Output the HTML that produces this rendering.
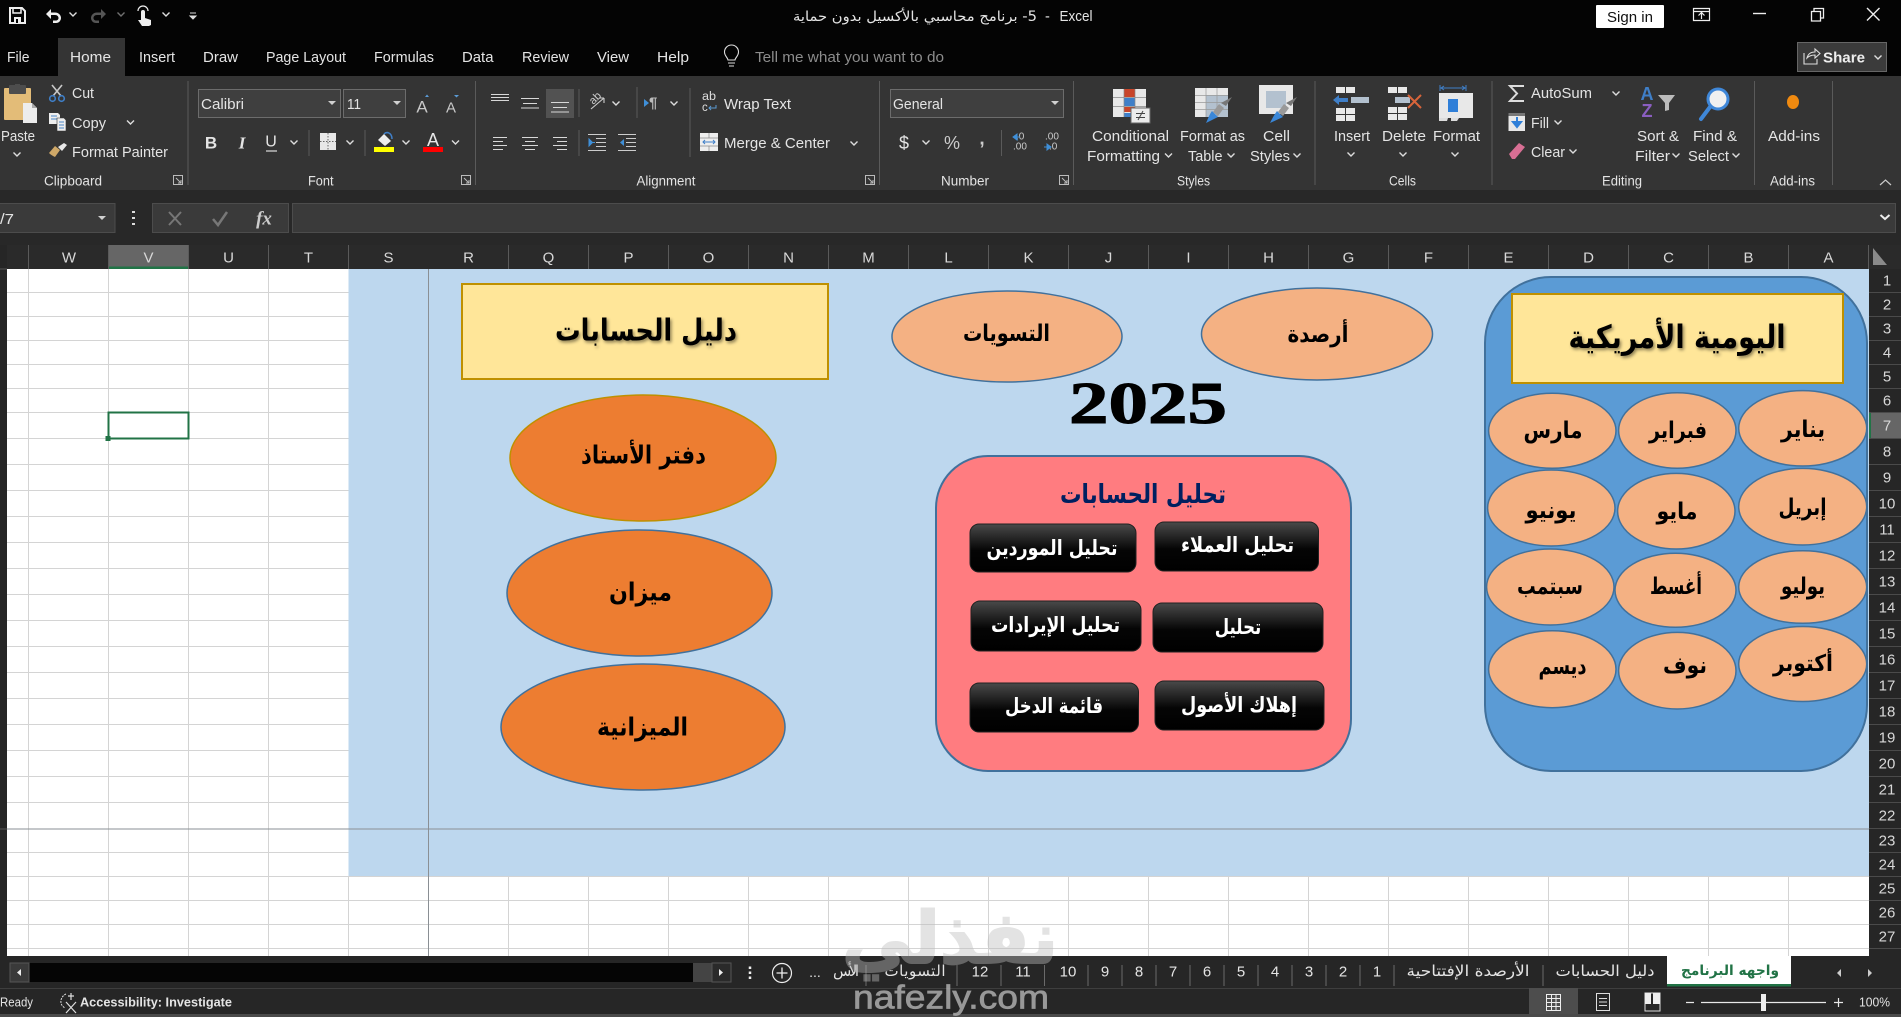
<!DOCTYPE html>
<html lang="en"><head><meta charset="utf-8"><title>Excel</title>
<style>
html,body{margin:0;padding:0;background:#000;overflow:hidden}
svg{display:block}
text{font-family:"Liberation Sans",sans-serif;font-size:14.5px;fill:#e4e4e4;dominant-baseline:central;transform:translateY(1px)}
.a{font-family:"DejaVu Sans",sans-serif;font-weight:bold;fill:#000;text-anchor:middle;direction:rtl;transform:none}
.r{font-family:"DejaVu Sans",sans-serif;fill:#e4e4e4;text-anchor:middle;direction:rtl;font-size:15px;transform:none}
.c{text-anchor:middle}
.h{font-size:15px;text-anchor:middle;fill:#d8d8d8;transform:none}
.n{font-size:15px;text-anchor:middle;fill:#d8d8d8;transform:translateX(1px)}
.sh{filter:url(#ds)}
</style></head><body>
<svg width="1901" height="1017" viewBox="0 0 1901 1017" xmlns="http://www.w3.org/2000/svg">
<defs>
<symbol id="ch" overflow="visible"><path d="M-3.5-1.5L0 2l3.5-3.5" fill="none" stroke="#ddd" stroke-width="1.4"/></symbol>
<symbol id="la" overflow="visible"><path d="M-4.5-4.5h9v9h-9zM-2-2l5 5M3 0v3H0" fill="none" stroke="#bbb" stroke-width="1"/></symbol>
<symbol id="dd" overflow="visible"><path d="M-4-2h8l-4 4z" fill="#d0d0d0"/></symbol>
<linearGradient id="bt" x1="0" y1="0" x2="0" y2="1"><stop offset="0" stop-color="#4a4a4a"/><stop offset=".55" stop-color="#050505"/><stop offset="1" stop-color="#000"/></linearGradient>
<filter id="ds" x="-10%" y="-20%" width="120%" height="150%"><feDropShadow dx="1.5" dy="2" stdDeviation="1.5" flood-color="#000" flood-opacity=".45"/></filter>
</defs>

<!-- title + tabs -->
<rect width="1901" height="76" fill="#040404"/>
<!-- qat -->
<g fill="none" stroke="#eee" stroke-width="2"><path d="M10 8h12l3 3v12H10z"/><path d="M13 8v5h8V8" stroke-width="1.5"/></g><rect x="14" y="17" width="7" height="6" fill="#eee"/><rect x="16" y="19" width="2" height="4" fill="#040404"/>
<path d="M46 14l5-5v3.5h4c4 0 6 3 6 5.500s-2 5-5 5h-3v-2.500h3c1.500 0 2.500-1.200 2.500-2.500s-1-3-3.500-3h-4V19z" fill="#eee"/>
<use href="#ch" x="73" y="14"/>
<path d="M106 14l-5-5v3.5h-4c-4 0-6 3-6 5.500s2 5 5 5h3v-2.500h-3c-1.500 0-2.500-1.200-2.500-2.500s1-3 3.500-3h4V19z" fill="#555"/>
<g opacity=".5"><use href="#ch" x="121" y="14"/></g>
<g transform="translate(0,3)"><path d="M141 15V9a2 2 0 014 0v6l6 2v5l-2 1h-7l-4-6 3 0z" fill="#eee"/><path d="M138 8a5 5 0 0110 0" fill="none" stroke="#eee" stroke-width="1.2"/></g>
<use href="#ch" x="166" y="14"/>
<path d="M190 13h6M190 16h6l-3 3z" stroke="#ddd" fill="#ddd" stroke-width="1"/>
<text class="r" x="915" y="17" textLength="244" lengthAdjust="spacingAndGlyphs" style="font-size:14px">5- برنامج محاسبي بالأكسيل بدون حماية</text>
<text x="1045" y="16" font-size="14">-</text><text x="1059.5" y="16" textLength="33" lengthAdjust="spacingAndGlyphs">Excel</text>
<rect x="1596" y="5" width="68" height="23" rx="1" fill="#fff"/><text class="c" x="1630" y="17" style="fill:#111" textLength="46" lengthAdjust="spacingAndGlyphs">Sign in</text>
<path d="M1693.5 8.5h16v12h-16zM1693.5 11.5h16M1701.5 19v-6M1698.5 15.500l3-3 3 3" fill="none" stroke="#eee" stroke-width="1.2"/>
<path d="M1753 13.5h13" stroke="#eee" stroke-width="1.4"/>
<path d="M1811.5 11.5h9v9.500h-9zM1814 11v-2.500h9.500v9.500h-3" fill="none" stroke="#eee" stroke-width="1.3"/>
<path d="M1867 8l12.500 12.500M1879.5 8L1867 20.500" stroke="#eee" stroke-width="1.4"/>

<rect x="58" y="38" width="67" height="38" fill="#343434"/>
<text x="7" y="57" textLength="22.5" lengthAdjust="spacingAndGlyphs">File</text>
<text x="70" y="57" textLength="41" lengthAdjust="spacingAndGlyphs">Home</text>
<text x="139" y="57" textLength="36" lengthAdjust="spacingAndGlyphs">Insert</text>
<text x="203" y="57" textLength="35" lengthAdjust="spacingAndGlyphs">Draw</text>
<text x="266" y="57" textLength="80" lengthAdjust="spacingAndGlyphs">Page Layout</text>
<text x="374" y="57" textLength="60" lengthAdjust="spacingAndGlyphs">Formulas</text>
<text x="462" y="57" textLength="31.5" lengthAdjust="spacingAndGlyphs">Data</text>
<text x="522" y="57" textLength="47" lengthAdjust="spacingAndGlyphs">Review</text>
<text x="597" y="57" textLength="32" lengthAdjust="spacingAndGlyphs">View</text>
<text x="657" y="57" textLength="32" lengthAdjust="spacingAndGlyphs">Help</text>
<path d="M728 60c0-2-3.5-4-3.5-8a7 7 0 0114 0c0 4-3.5 6-3.5 8zM728 63h7M729 66h5" fill="none" stroke="#ddd" stroke-width="1.1"/>
<text x="755" y="57" textLength="189" lengthAdjust="spacingAndGlyphs" style="fill:#8c8c8c">Tell me what you want to do</text>
<rect x="1797.5" y="42.5" width="89" height="29" fill="#3b3b3b" stroke="#666"/>
<path d="M1804 53v11h13v-5M1807 58c1-4 4-6 8-6v-3l5 4.500-5 4.500v-3c-3 0-6 1-8 3z" fill="none" stroke="#ddd" stroke-width="1.1"/>
<text x="1823" y="57" textLength="42" lengthAdjust="spacingAndGlyphs" style="font-weight:bold;font-size:15px;fill:#eee">Share</text>
<use href="#ch" x="1878" y="57"/>

<!-- ribbon -->
<rect y="76" width="1901" height="114" fill="#343434"/>
<rect y="190" width="1901" height="79" fill="#282828"/>
<path d="M188 81v104M475.5 81v104M879.5 81v104M1073.5 81v104M1315 81v104M1492 81v104M1754.5 81v104M1832.5 81v104" stroke="#5a5a5a"/>

<!-- clipboard -->
<rect x="4" y="88" width="27" height="32" rx="1" fill="#e3bc78"/><rect x="9" y="85" width="17" height="9" rx="1" fill="#4d4d4d"/><rect x="15" y="84" width="5" height="4" fill="#4d4d4d"/>
<path d="M23 103h9l5 5v15H23z" fill="#ededed"/><path d="M32 103v5h5z" fill="#aaa"/>
<text x="1" y="136" textLength="34" lengthAdjust="spacingAndGlyphs">Paste</text><use href="#ch" x="17" y="154"/>
<path d="M52 85l9 11M62 85l-9 11" stroke="#c8c8c8" stroke-width="1.6"/><circle cx="52.5" cy="98.5" r="2.8" fill="none" stroke="#3f7fc8" stroke-width="1.6"/><circle cx="61.5" cy="98.5" r="2.8" fill="none" stroke="#3f7fc8" stroke-width="1.6"/>
<text x="72" y="93" textLength="22" lengthAdjust="spacingAndGlyphs">Cut</text>
<path d="M49 113h9l2 2v9H49z" fill="#eee"/><path d="M51 116h6M51 119h6" stroke="#4a87c8"/><path d="M57 118h7l2 2v11h-9z" fill="#eee" stroke="#343434" stroke-width=".6"/><path d="M59 122h5M59 125h5M59 128h5" stroke="#4a87c8"/>
<text x="72" y="123" textLength="34" lengthAdjust="spacingAndGlyphs">Copy</text><use href="#ch" x="130.5" y="122"/>
<path d="M49 153l6-7 5 4-5 7c-2-1-4-2-6-4z" fill="#cfa868"/><path d="M58 147l6-4 3 2-5 6z" fill="#e8e8e8"/>
<text x="72" y="152" textLength="96" lengthAdjust="spacingAndGlyphs">Format Painter</text>
<text x="44" y="180" textLength="58" lengthAdjust="spacingAndGlyphs" style="font-size:13.5px">Clipboard</text><use href="#la" x="178" y="180"/>

<!-- font -->
<rect x="198.5" y="89.5" width="142" height="28" fill="#3f3f3f" stroke="#6c6c6c"/><text x="201" y="104" textLength="43" lengthAdjust="spacingAndGlyphs">Calibri</text><use href="#dd" x="332" y="103"/>
<rect x="343.5" y="89.5" width="62" height="28" fill="#3f3f3f" stroke="#6c6c6c"/><text x="347" y="104" textLength="14" lengthAdjust="spacingAndGlyphs">11</text><use href="#dd" x="397" y="103"/>
<text class="c" x="422" y="106" style="font-size:17px;fill:#c8c8c8">A</text><path d="M425 97l2-2.500 2 2.500z" fill="#5b9bd5"/>
<text class="c" x="451" y="107" style="font-size:15px;fill:#c8c8c8">A</text><path d="M454 95h5l-2.500 2.500z" fill="#5b9bd5"/>
<text class="c" x="211" y="142" style="font-weight:bold;font-size:17px">B</text>
<text class="c" x="242" y="142" style="font-style:italic;font-weight:bold;font-size:17px;font-family:'Liberation Serif',serif">I</text>
<text class="c" x="271" y="141" style="font-size:16px">U</text><path d="M266 151h11" stroke="#ddd" stroke-width="1.2"/><use href="#ch" x="294" y="142"/>
<path d="M309 130v26M365 130v26M579 89v28M579 130v26M690 88v69M637 87v31M1001.5 130v26" stroke="#5a5a5a"/>
<rect x="320" y="133" width="16" height="17" fill="#e8e8e8"/><path d="M328 133v17M320 141.5h16" stroke="#666" stroke-dasharray="1.5 1.5"/><use href="#ch" x="350" y="142"/>
<path d="M378 140l6-6 7 7-6 5z" fill="#eee"/><path d="M384 134c3-3 8-1 8 5" fill="none" stroke="#3f7fc8" stroke-width="1.5"/><rect x="374" y="147" width="20" height="5" fill="#ff0"/><use href="#ch" x="406" y="142"/>
<text class="c" x="433" y="139" style="font-size:18px;fill:#e8e8e8">A</text><rect x="423" y="147" width="20" height="5" fill="#f00"/><use href="#ch" x="455.5" y="142"/>
<text x="308" y="180" textLength="25.5" lengthAdjust="spacingAndGlyphs" style="font-size:13.5px">Font</text><use href="#la" x="466" y="180"/>

<!-- alignment -->
<rect x="546" y="89" width="28" height="29" fill="#525252"/>
<path d="M491 94.5h18M491 97.5h18M491 100.5h18M521 98.5h18M523 103.5h14M521 108h18M551 102.5h18M553 107.5h14M551 112h18" stroke="#d8d8d8" stroke-width="1.1"/>
<path d="M493 137.5h14M493 141.5h10M493 145.5h14M493 149.5h10M522 137.5h16M525 141.5h10M522 145.5h16M525 149.5h10M553 137.5h14M557 141.5h10M553 145.5h14M557 149.5h10" stroke="#d8d8d8" stroke-width="1.1"/>
<text x="590" y="100" style="font-size:11px;fill:#ccc;transform:rotate(-45deg);transform-origin:594px 100px">ab</text><path d="M591 109l13-11M604 98h-5M604 98v5" stroke="#ccc" fill="none" stroke-width="1.1"/><use href="#ch" x="616" y="103"/>
<path d="M588 134.5h18M596 138.5h10M596 142.5h10M596 146.5h10M588 150.5h18" stroke="#ccc" stroke-width="1.1"/><path d="M589 139v7l3.5-3.5zM592 142.5h3" fill="#3f8fd8" stroke="#3f8fd8"/>
<path d="M618 134.5h18M626 138.5h10M626 142.5h10M626 146.5h10M618 150.5h18" stroke="#ccc" stroke-width="1.1"/><path d="M624 139l-4 3.5 4 3.5z" fill="#3f8fd8"/>
<path d="M644 99v8l5-4z" fill="#3f8fd8"/><text x="649" y="102" style="font-size:15px;font-weight:bold;fill:#bbb">¶</text><use href="#ch" x="674" y="103"/>
<text x="702" y="96" style="font-size:11.5px;fill:#ddd" textLength="14" lengthAdjust="spacingAndGlyphs">ab</text><text x="702" y="107" style="font-size:11.5px;fill:#ddd">c</text><path d="M716 105v3h-7M711 106l-2 2 2 2" fill="none" stroke="#5b9bd5"/>
<text x="724" y="104" textLength="67" lengthAdjust="spacingAndGlyphs">Wrap Text</text>
<rect x="700" y="133" width="18" height="18" fill="#eee"/><path d="M700 138h18M700 146h18M709 133v5M709 146v5" stroke="#888" stroke-width=".7"/><path d="M703 142h12M705 140l-2 2 2 2M713 140l2 2-2 2" stroke="#3f7fc8" fill="none"/>
<text x="724" y="143" textLength="106" lengthAdjust="spacingAndGlyphs">Merge &amp; Center</text><use href="#ch" x="854" y="143"/>
<text x="636.5" y="180" textLength="59" lengthAdjust="spacingAndGlyphs" style="font-size:13.5px">Alignment</text><use href="#la" x="870" y="180"/>

<!-- number -->
<rect x="890.5" y="89.5" width="173" height="28" fill="#3f3f3f" stroke="#6c6c6c"/><text x="893" y="104" textLength="50" lengthAdjust="spacingAndGlyphs">General</text><use href="#dd" x="1055" y="103"/>
<text class="c" x="904" y="142" style="font-size:18px">$</text><use href="#ch" x="926" y="142"/>
<text class="c" x="952" y="142" style="font-size:18px;fill:#ccc">%</text><text class="c" x="982" y="138" style="font-size:19px;font-weight:bold;fill:#ccc">,</text>
<text x="1016" y="136" style="font-size:10px;fill:#ccc">.0</text><text x="1013" y="146" style="font-size:10px;fill:#ccc">.00</text><path d="M1017 134l-4 3 4 3zM1016 137h4" fill="#3f8fd8" stroke="#3f8fd8"/>
<text x="1045" y="136" style="font-size:10px;fill:#ccc">.00</text><text x="1049" y="146" style="font-size:10px;fill:#ccc">.0</text><path d="M1047 144l4 3-4 3zM1048 147h-4" fill="#3f8fd8" stroke="#3f8fd8"/>
<text x="941" y="180" textLength="48" lengthAdjust="spacingAndGlyphs" style="font-size:13.5px">Number</text><use href="#la" x="1064" y="180"/>

<!-- styles -->
<rect x="1113" y="89" width="33" height="28" fill="#e8e8e8"/><rect x="1124" y="89" width="11" height="8" fill="#c8452a"/><rect x="1124" y="98" width="11" height="8" fill="#3f7fc8"/><rect x="1124" y="107" width="11" height="5" fill="#c8452a"/><rect x="1124" y="113" width="11" height="4" fill="#3f7fc8"/><path d="M1113 97.5h33M1113 106.5h33M1124 89v28M1135 89v28" stroke="#888" stroke-width=".7"/>
<rect x="1131" y="108" width="19" height="15" fill="#ececec" stroke="#666"/><path d="M1136 113.5h9M1136 117.5h9M1143 111l-5 9" stroke="#444" fill="none"/>
<text x="1092" y="136" textLength="77" lengthAdjust="spacingAndGlyphs">Conditional</text><text x="1087" y="156" textLength="73" lengthAdjust="spacingAndGlyphs">Formatting</text><use href="#ch" x="1168.5" y="155"/>
<rect x="1195" y="88" width="33" height="29" fill="#e8e8e8"/><rect x="1206" y="95" width="22" height="22" fill="#b3c1cf"/><path d="M1195 95.5h33M1195 102.5h33M1195 109.5h33M1206 88v29M1217 88v29" stroke="#999" stroke-width=".7"/>
<path d="M1232 97l-6 9-5-3z" fill="#777"/><path d="M1219 104l5 4-6 8-5-4z" fill="#999"/><path d="M1212 111l6 6-12 6c2-4 3-8 6-12z" fill="#3a87d8"/>
<text x="1180" y="136" textLength="65" lengthAdjust="spacingAndGlyphs">Format as</text><text x="1188" y="156" textLength="34.5" lengthAdjust="spacingAndGlyphs">Table</text><use href="#ch" x="1231" y="155"/>
<rect x="1259" y="85" width="34" height="29" fill="#e8e8e8"/><rect x="1266" y="91" width="20" height="17" fill="#b3c1cf"/>
<path d="M1297 97l-6 9-5-3z" fill="#777"/><path d="M1284 104l5 4-6 8-5-4z" fill="#999"/><path d="M1277 111l6 6-13 6c2-4 4-8 7-12z" fill="#3a87d8"/>
<text x="1263" y="136" textLength="27" lengthAdjust="spacingAndGlyphs">Cell</text><text x="1250" y="156" textLength="40" lengthAdjust="spacingAndGlyphs">Styles</text><use href="#ch" x="1297" y="155"/>
<text x="1177" y="180" textLength="33" lengthAdjust="spacingAndGlyphs" style="font-size:13.5px">Styles</text>

<!-- cells -->
<g fill="#e8e8e8"><rect x="1336" y="87" width="19" height="6"/><rect x="1336" y="108" width="19" height="13"/><rect x="1388" y="87" width="19" height="6"/><rect x="1388" y="107" width="19" height="13"/></g>
<path d="M1345.5 87v6M1345.5 108v13M1336 114.5h19M1397.5 87v6M1397.5 107v13M1388 113.5h19" stroke="#343434"/>
<rect x="1351" y="97" width="18" height="6" fill="#b3c1cf"/><path d="M1333 100l6-5v3h9v4h-9v3z" fill="#3f7fc8"/>
<rect x="1395" y="97" width="15" height="6" fill="#b3c1cf"/><path d="M1408 95l13 13M1421 95l-13 13" stroke="#d8643a" stroke-width="2"/>
<path d="M1440 88h26M1440 85v6M1466 85v6M1444 86l-3 2 3 2M1462 86l3 2-3 2" stroke="#3f7fc8" fill="none"/>
<rect x="1439" y="93" width="34" height="25" fill="#e8e8e8"/><rect x="1448" y="99" width="10" height="13" fill="#2f7fd8"/><path d="M1439 121h8l1-3h-9zM1451 121h6l2-3h-8z" fill="#ddd"/>
<text x="1334" y="136" textLength="36" lengthAdjust="spacingAndGlyphs">Insert</text><use href="#ch" x="1351" y="154"/>
<text x="1382" y="136" textLength="44" lengthAdjust="spacingAndGlyphs">Delete</text><use href="#ch" x="1403" y="154"/>
<text x="1433" y="136" textLength="47" lengthAdjust="spacingAndGlyphs">Format</text><use href="#ch" x="1455" y="154"/>
<text x="1389" y="180" textLength="27" lengthAdjust="spacingAndGlyphs" style="font-size:13.5px">Cells</text>

<!-- editing -->
<path d="M1524 86h-14l7 7.5-7 7.5h14" fill="none" stroke="#ddd" stroke-width="2"/>
<text x="1531" y="93" textLength="61" lengthAdjust="spacingAndGlyphs">AutoSum</text><use href="#ch" x="1616" y="93"/>
<rect x="1508.5" y="113" width="16.5" height="18" fill="#e8e8e8"/><rect x="1508.5" y="113" width="16.5" height="3" fill="#777"/><path d="M1517 117v8M1513 122l4 5 4-5z" stroke="#2f7fd8" fill="#2f7fd8" stroke-width="2"/>
<text x="1531" y="123" textLength="18" lengthAdjust="spacingAndGlyphs">Fill</text><use href="#ch" x="1558" y="122"/>
<path d="M1509 154l10-11 6 4-10 12h-3z" fill="#d86f94"/>
<text x="1531" y="152" textLength="34" lengthAdjust="spacingAndGlyphs">Clear</text><use href="#ch" x="1573" y="151"/>
<text class="c" x="1647" y="93" style="font-size:18px;font-weight:bold;fill:#3f7fc8">A</text><text class="c" x="1647" y="110" style="font-size:18px;font-weight:bold;fill:#8a5ec0">Z</text>
<path d="M1658 95h17l-6 8v7l-4 1v-8z" fill="#bbb"/>
<text x="1637" y="136" textLength="42" lengthAdjust="spacingAndGlyphs">Sort &amp;</text><text x="1635" y="156" textLength="35" lengthAdjust="spacingAndGlyphs">Filter</text><use href="#ch" x="1676" y="155"/>
<circle cx="1718" cy="99" r="10" fill="#f0f0f0" stroke="#3f87d8" stroke-width="3"/><path d="M1710 107l-9 12" stroke="#3f87d8" stroke-width="4" stroke-linecap="round"/>
<text x="1693" y="136" textLength="44" lengthAdjust="spacingAndGlyphs">Find &amp;</text><text x="1688" y="156" textLength="41" lengthAdjust="spacingAndGlyphs">Select</text><use href="#ch" x="1736" y="155"/>
<text x="1602" y="180" textLength="40" lengthAdjust="spacingAndGlyphs" style="font-size:13.5px">Editing</text>
<ellipse cx="1793" cy="102" rx="6" ry="7" fill="#f08a10"/>
<text x="1768" y="136" textLength="52" lengthAdjust="spacingAndGlyphs">Add-ins</text><text x="1770" y="180" textLength="45" lengthAdjust="spacingAndGlyphs" style="font-size:13.5px">Add-ins</text>
<path d="M1880 185l5.5-5 5.5 5" fill="none" stroke="#ccc" stroke-width="1.2"/>

<!-- formula bar -->
<rect x="-1" y="203.5" width="116" height="29" fill="#3a3a3a" stroke="#4c4c4c"/><text x="0" y="219" textLength="14" lengthAdjust="spacingAndGlyphs">/7</text><use href="#dd" x="102" y="218"/>
<path d="M133.5 211v2M133.5 217v2M133.5 223v2" stroke="#ddd" stroke-width="3"/>
<rect x="152.5" y="203.5" width="136" height="29" fill="#3a3a3a" stroke="#4c4c4c"/><rect x="292.5" y="203.5" width="1603" height="29" fill="#3a3a3a" stroke="#4c4c4c"/>
<path d="M169 212l12 13M181 212l-12 13" stroke="#777" stroke-width="2"/><path d="M213 219l5 6 9-13" stroke="#777" stroke-width="2.5" fill="none"/>
<text class="c" x="264" y="218" style="font-family:'Liberation Serif',serif;font-style:italic;font-weight:bold;font-size:19px;fill:#ccc">fx</text>
<path d="M1880.5 215l4.500 4 4.500-4" fill="none" stroke="#eee" stroke-width="2"/>

<!-- sheet -->
<rect x="7" y="269" width="1862" height="687" fill="#fff"/>
<rect x="348.5" y="269" width="1520.5" height="607.5" fill="#bdd7ee"/>
<path d="M7 292.5H348.5M7 316.5H348.5M7 340.5H348.5M7 364.5H348.5M7 388.5H348.5M7 412.5H348.5M7 438.5H348.5M7 464.5H348.5M7 490.5H348.5M7 516.5H348.5M7 542.5H348.5M7 568.5H348.5M7 594.5H348.5M7 620.5H348.5M7 646.5H348.5M7 672.5H348.5M7 698.5H348.5M7 724.5H348.5M7 750.5H348.5M7 776.5H348.5M7 802.5H348.5M7 852.5H348.5M7 900.5H1869M7 924.5H1869M7 948.5H1869M7 876.5H1869M28.5 269V956M108.5 269V956M188.5 269V956M268.5 269V956M348.5 876.5V956M508.5 876.5V956M588.5 876.5V956M668.5 876.5V956M748.5 876.5V956M828.5 876.5V956M908.5 876.5V956M988.5 876.5V956M1068.5 876.5V956M1148.5 876.5V956M1228.5 876.5V956M1308.5 876.5V956M1388.5 876.5V956M1468.5 876.5V956M1548.5 876.5V956M1628.5 876.5V956M1708.5 876.5V956M1788.5 876.5V956" stroke="#d4d4d4" fill="none"/>
<path d="M428.5 245V956M7 829H1869" stroke="#8a8f94"/>
<rect x="108.5" y="412.5" width="80" height="26" fill="#fff" stroke="#217346" stroke-width="2"/><rect x="105.5" y="436" width="5" height="5" fill="#217346"/>

<!-- col headers -->
<rect x="0" y="245" width="1901" height="24" fill="#2a2a2a"/>
<rect x="108.5" y="245" width="80" height="24" fill="#666"/><rect x="108.5" y="266.5" width="80" height="2.5" fill="#217346"/>
<path d="M28.5 245v24M108.5 245v24M188.5 245v24M268.5 245v24M348.5 245v24M508.5 245v24M588.5 245v24M668.5 245v24M748.5 245v24M828.5 245v24M908.5 245v24M988.5 245v24M1068.5 245v24M1148.5 245v24M1228.5 245v24M1308.5 245v24M1388.5 245v24M1468.5 245v24M1548.5 245v24M1628.5 245v24M1708.5 245v24M1788.5 245v24M1868.5 245v24" stroke="#5a5a5a"/>
<text class="h" x="69" y="258">W</text><text class="h" x="148.5" y="258">V</text><text class="h" x="228.5" y="258">U</text><text class="h" x="308.5" y="258">T</text><text class="h" x="388.5" y="258">S</text><text class="h" x="468.5" y="258">R</text><text class="h" x="548.5" y="258">Q</text><text class="h" x="628.5" y="258">P</text><text class="h" x="708.5" y="258">O</text><text class="h" x="788.5" y="258">N</text><text class="h" x="868.5" y="258">M</text><text class="h" x="948.5" y="258">L</text><text class="h" x="1028.5" y="258">K</text><text class="h" x="1108.5" y="258">J</text><text class="h" x="1188.5" y="258">I</text><text class="h" x="1268.5" y="258">H</text><text class="h" x="1348.5" y="258">G</text><text class="h" x="1428.5" y="258">F</text><text class="h" x="1508.5" y="258">E</text><text class="h" x="1588.5" y="258">D</text><text class="h" x="1668.5" y="258">C</text><text class="h" x="1748.5" y="258">B</text><text class="h" x="1828.5" y="258">A</text>
<path d="M1873 248v17h14z" fill="#8a8a8a"/>

<!-- row headers -->
<rect x="1869" y="269" width="32" height="687" fill="#262626"/>
<rect x="1869" y="412.5" width="32" height="26" fill="#666"/><rect x="1869" y="412.5" width="2" height="26" fill="#217346"/>
<path d="M1869 292.5h32M1869 316.5h32M1869 340.5h32M1869 364.5h32M1869 388.5h32M1869 412.5h32M1869 438.5h32M1869 464.5h32M1869 490.5h32M1869 516.5h32M1869 542.5h32M1869 568.5h32M1869 594.5h32M1869 620.5h32M1869 646.5h32M1869 672.5h32M1869 698.5h32M1869 724.5h32M1869 750.5h32M1869 776.5h32M1869 802.5h32M1869 828.5h32M1869 852.5h32M1869 876.5h32M1869 900.5h32M1869 924.5h32M1869 948.5h32" stroke="#4a4a4a"/>
<text class="n" x="1886" y="281">1</text><text class="n" x="1886" y="305">2</text><text class="n" x="1886" y="329">3</text><text class="n" x="1886" y="353">4</text><text class="n" x="1886" y="377">5</text><text class="n" x="1886" y="401">6</text><text class="n" x="1886" y="426">7</text><text class="n" x="1886" y="452">8</text><text class="n" x="1886" y="478">9</text><text class="n" x="1886" y="504">10</text><text class="n" x="1886" y="530">11</text><text class="n" x="1886" y="556">12</text><text class="n" x="1886" y="582">13</text><text class="n" x="1886" y="608">14</text><text class="n" x="1886" y="634">15</text><text class="n" x="1886" y="660">16</text><text class="n" x="1886" y="686">17</text><text class="n" x="1886" y="712">18</text><text class="n" x="1886" y="738">19</text><text class="n" x="1886" y="764">20</text><text class="n" x="1886" y="790">21</text><text class="n" x="1886" y="816">22</text><text class="n" x="1886" y="841">23</text><text class="n" x="1886" y="865">24</text><text class="n" x="1886" y="889">25</text><text class="n" x="1886" y="913">26</text><text class="n" x="1886" y="937">27</text>

<!-- left edge -->
<rect x="0" y="245" width="7" height="711" fill="#262626"/><path d="M0 269h7M0 829h7" stroke="#555"/>

<!-- right block -->
<rect x="1485" y="277" width="382" height="494" rx="66" fill="#5b9bd5" stroke="#41719c" stroke-width="2"/>
<rect x="1512" y="294" width="331" height="89" fill="#ffe699" stroke="#bf9000" stroke-width="2"/>
<text class="a sh" x="1677" y="337" textLength="217" lengthAdjust="spacingAndGlyphs" style="font-size:32px">اليومية الأمريكية</text>
<g fill="#f4b183" stroke="#41719c" stroke-width="1.5">
<ellipse cx="1552.3" cy="430.8" rx="63.7" ry="37.5"/><ellipse cx="1677.3" cy="430.5" rx="58.7" ry="37.8"/><ellipse cx="1802.7" cy="428.3" rx="64" ry="37.7"/>
<ellipse cx="1551.3" cy="508" rx="63.7" ry="38"/><ellipse cx="1676.3" cy="511.2" rx="58.7" ry="37.8"/><ellipse cx="1802.7" cy="506.7" rx="64" ry="38.3"/>
<ellipse cx="1550.3" cy="587" rx="63.7" ry="38"/><ellipse cx="1675.5" cy="590.3" rx="60.5" ry="37"/><ellipse cx="1802.7" cy="587" rx="64" ry="36.3"/>
<ellipse cx="1552.3" cy="669.2" rx="63.7" ry="38.5"/><ellipse cx="1677.3" cy="670.7" rx="58.7" ry="38.3"/><ellipse cx="1802.7" cy="664" rx="64" ry="37.5"/>
</g>
<text class="a" x="1803" y="430" textLength="44" lengthAdjust="spacingAndGlyphs" style="font-size:23px">يناير</text>
<text class="a" x="1678" y="431" textLength="58" lengthAdjust="spacingAndGlyphs" style="font-size:23px">فبراير</text>
<text class="a" x="1553" y="431" textLength="59" lengthAdjust="spacingAndGlyphs" style="font-size:23px">مارس</text>
<text class="a" x="1802.5" y="508" textLength="48" lengthAdjust="spacingAndGlyphs" style="font-size:23px">إبريل</text>
<text class="a" x="1677" y="512" textLength="41" lengthAdjust="spacingAndGlyphs" style="font-size:23px">مايو</text>
<text class="a" x="1551" y="511" textLength="51" lengthAdjust="spacingAndGlyphs" style="font-size:23px">يونيو</text>
<text class="a" x="1803" y="587" textLength="44" lengthAdjust="spacingAndGlyphs" style="font-size:23px">يوليو</text>
<text class="a" x="1676" y="587" textLength="52" lengthAdjust="spacingAndGlyphs" style="font-size:23px">أغسط</text>
<text class="a" x="1550" y="587" textLength="66" lengthAdjust="spacingAndGlyphs" style="font-size:23px">سبتمب</text>
<text class="a" x="1803" y="664" textLength="60" lengthAdjust="spacingAndGlyphs" style="font-size:23px">أكتوبر</text>
<text class="a" x="1685" y="666" textLength="44" lengthAdjust="spacingAndGlyphs" style="font-size:23px">نوف</text>
<text class="a" x="1562.5" y="667" textLength="48" lengthAdjust="spacingAndGlyphs" style="font-size:23px">ديسم</text>

<!-- center -->
<ellipse cx="1007" cy="336.5" rx="115" ry="45.5" fill="#f4b183" stroke="#41719c" stroke-width="1.5"/>
<text class="a" x="1006.5" y="334" textLength="87" lengthAdjust="spacingAndGlyphs" style="font-size:23px">التسويات</text>
<ellipse cx="1317" cy="334" rx="115.5" ry="46" fill="#f4b183" stroke="#41719c" stroke-width="1.5"/>
<text class="a" x="1318" y="335" textLength="61" lengthAdjust="spacingAndGlyphs" style="font-size:23px">أرصدة</text>
<text x="1069" y="403" textLength="158" lengthAdjust="spacingAndGlyphs" style="font-family:'Liberation Serif',serif;font-weight:bold;font-size:59px;fill:#000;stroke:#000;stroke-width:1;transform:none">2025</text>

<rect x="936" y="456" width="415" height="315" rx="52" fill="#ff7c80" stroke="#41719c" stroke-width="2"/>
<text class="a" x="1143" y="495" textLength="166" lengthAdjust="spacingAndGlyphs" style="font-size:26px;fill:#002060">تحليل الحسابات</text>
<g stroke="#222" stroke-width="1">
<rect x="970" y="524" width="166" height="48" rx="9" fill="url(#bt)"/><rect x="1155" y="522" width="163.5" height="49" rx="9" fill="url(#bt)"/>
<rect x="971" y="601" width="170" height="50" rx="9" fill="url(#bt)"/><rect x="1153" y="603" width="170" height="49" rx="9" fill="url(#bt)"/>
<rect x="970" y="683" width="168.5" height="49" rx="9" fill="url(#bt)"/><rect x="1155" y="681" width="169" height="49" rx="9" fill="url(#bt)"/>
</g>
<text class="a" x="1052" y="548" textLength="131" lengthAdjust="spacingAndGlyphs" style="font-size:21px;fill:#fff">تحليل الموردين</text>
<text class="a" x="1237.5" y="545" textLength="113" lengthAdjust="spacingAndGlyphs" style="font-size:21px;fill:#fff">تحليل العملاء</text>
<text class="a" x="1055.5" y="625" textLength="129" lengthAdjust="spacingAndGlyphs" style="font-size:21px;fill:#fff">تحليل الإيرادات</text>
<text class="a" x="1238" y="627" textLength="46.5" lengthAdjust="spacingAndGlyphs" style="font-size:21px;fill:#fff">تحليل</text>
<text class="a" x="1054" y="706" textLength="98" lengthAdjust="spacingAndGlyphs" style="font-size:21px;fill:#fff">قائمة الدخل</text>
<text class="a" x="1239" y="705" textLength="116" lengthAdjust="spacingAndGlyphs" style="font-size:21px;fill:#fff">إهلاك الأصول</text>

<!-- left block -->
<rect x="462" y="284" width="366" height="95" fill="#ffe699" stroke="#bf9000" stroke-width="2"/>
<text class="a sh" x="646" y="331" textLength="182" lengthAdjust="spacingAndGlyphs" style="font-size:30px">دليل الحسابات</text>
<ellipse cx="643" cy="458" rx="133" ry="63" fill="#ed7d31" stroke="#bf9000" stroke-width="1.5"/>
<text class="a" x="643.5" y="455" textLength="125" lengthAdjust="spacingAndGlyphs" style="font-size:25px">دفتر الأستاذ</text>
<ellipse cx="639.5" cy="593" rx="132.5" ry="63" fill="#ed7d31" stroke="#41719c" stroke-width="1.5"/>
<text class="a" x="640.5" y="592" textLength="63" lengthAdjust="spacingAndGlyphs" style="font-size:25px">ميزان</text>
<ellipse cx="643" cy="727" rx="142" ry="63" fill="#ed7d31" stroke="#41719c" stroke-width="1.5"/>
<text class="a" x="642.5" y="727" textLength="91" lengthAdjust="spacingAndGlyphs" style="font-size:25px">الميزانية</text>

<!-- tabs bar -->
<rect y="956" width="1901" height="32" fill="#262626"/>
<rect x="29" y="963" width="664" height="19" fill="#050505"/>
<rect x="10" y="963" width="19" height="19" fill="#3a3a3a" stroke="#555"/><path d="M21 969v7l-4-3.5z" fill="#eee"/>
<rect x="693" y="963" width="19" height="19" fill="#444"/><rect x="712" y="963" width="19" height="19" fill="#2a2a2a" stroke="#555"/><path d="M719 969v7l4-3.5z" fill="#eee"/>
<path d="M750 966.5v2.500M750 971.5v2.500M750 976.5v2.500" stroke="#eee" stroke-width="2.5"/>
<circle cx="782" cy="973" r="9.5" fill="none" stroke="#eee" stroke-width="1.2"/><path d="M776.5 973h11M782 967.5v11" stroke="#eee" stroke-width="1.3"/>
<text class="c" x="815" y="971" style="font-size:14px">...</text>
<text class="r" x="846" y="971" textLength="26">الأس</text>
<path d="M866 965v21M957 965v21M1001 965v21M1044.5 965v21M1088 965v21M1122 965v21M1156 965v21M1190 965v21M1224 965v21M1258 965v21M1292 965v21M1326 965v21M1360 965v21M1394 965v21M1543 965v21" stroke="#6a6a6a"/>
<text class="r" x="915" y="971" textLength="61">التسويات</text>
<text class="c" x="980" y="971" style="font-size:15px">12</text><text class="c" x="1023" y="971" style="font-size:15px">11</text><text class="c" x="1068" y="971" style="font-size:15px">10</text><text class="c" x="1105" y="971" style="font-size:15px">9</text><text class="c" x="1139" y="971" style="font-size:15px">8</text><text class="c" x="1173" y="971" style="font-size:15px">7</text><text class="c" x="1207" y="971" style="font-size:15px">6</text><text class="c" x="1241" y="971" style="font-size:15px">5</text><text class="c" x="1275" y="971" style="font-size:15px">4</text><text class="c" x="1309" y="971" style="font-size:15px">3</text><text class="c" x="1343" y="971" style="font-size:15px">2</text><text class="c" x="1377" y="971" style="font-size:15px">1</text>
<text class="r" x="1468" y="971" textLength="123" lengthAdjust="spacingAndGlyphs">الأرصدة الإفتتاحية</text>
<text class="r" x="1605" y="971" textLength="99" lengthAdjust="spacingAndGlyphs">دليل الحسابات</text>
<rect x="1667" y="956" width="124" height="29" fill="#fff"/><rect x="1667" y="984" width="124" height="2.5" fill="#217346"/>
<text class="r" x="1730" y="971" textLength="98" lengthAdjust="spacingAndGlyphs" style="fill:#217346;font-weight:bold;font-size:14px">واجهه البرنامج</text>
<path d="M1841 969v8l-4-4zM1868 969v8l4-4z" fill="#ccc"/>

<!-- status -->
<rect y="988" width="1901" height="26" fill="#262626"/><path d="M0 988.5h1901" stroke="#3e3e3e"/><rect y="1014" width="1901" height="3" fill="#4a4a4a"/>
<text x="0" y="1001" textLength="33" lengthAdjust="spacingAndGlyphs" style="font-size:13px">Ready</text>
<path d="M66 994c-5 2-8 10-1 14" fill="none" stroke="#ddd" stroke-width="1" stroke-dasharray="2 1"/><path d="M66 1002l10 11M76 1002l-10 11M71 993v7M68 996h6" stroke="#ddd" stroke-width="1.2" fill="none"/>
<text x="80" y="1001" textLength="152" lengthAdjust="spacingAndGlyphs" style="font-weight:bold;font-size:13px">Accessibility: Investigate</text>
<rect x="1529" y="988" width="49" height="26" fill="#4d4d4d"/>
<path d="M1546.5 994.5h14v16h-14zM1546.5 998.5h14M1546.5 1002.5h14M1546.5 1006.5h14M1551.5 994.5v16M1556 994.5v16" stroke="#eee" fill="none"/>
<path d="M1596.5 993.5h13v17h-13zM1599 998.5h8M1599 1002h8M1599 1005.5h8" stroke="#ddd" fill="none"/>
<rect x="1645" y="993" width="15" height="18" fill="none" stroke="#ddd"/><rect x="1645" y="993" width="6" height="11" fill="#eee"/><rect x="1653" y="993" width="7" height="11" fill="#eee"/>
<path d="M1686 1002.5h8M1701 1002.5h125M1834 1002.5h9M1838.5 998v9" stroke="#e8e8e8" stroke-width="1.2"/><rect x="1761" y="994" width="5" height="17" fill="#eee"/>
<text x="1859" y="1001" textLength="31" lengthAdjust="spacingAndGlyphs" style="font-size:13px">100%</text>

<!-- watermark -->
<text x="950" y="938" class="a" textLength="216" lengthAdjust="spacingAndGlyphs" style="font-size:72px;fill:#bdbdbd;opacity:.42;stroke:#bdbdbd;stroke-width:2">نفذلي</text>
<text x="853" y="997" textLength="196" lengthAdjust="spacingAndGlyphs" style="font-size:33px;fill:#b5b5b5;stroke:#b5b5b5;stroke-width:.7;opacity:.8;transform:none">nafezly.com</text>
</svg>
</body></html>
